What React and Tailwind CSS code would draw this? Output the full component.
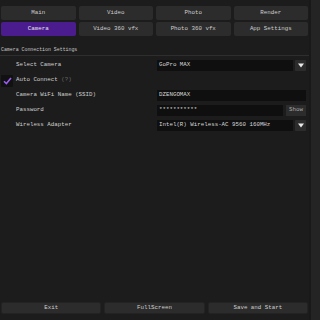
import React from 'react';

const mono = { fontFamily: '"Liberation Mono", "DejaVu Sans Mono", monospace' };

function TabButton({ label, active }) {
  return (
    <div
      className={
        'h-[14px] rounded-[2px] flex items-center justify-center text-[5.8px] ' +
        (active ? 'bg-[#4b1c8e] text-[#e6e6e6]' : 'bg-[#2c2c2c] text-[#cfcfcf]')
      }
    >
      {label}
    </div>
  );
}

function Caret() {
  return (
    <div className="w-[11px] h-[11px] bg-[#2c2c2c] rounded-[1px] flex items-center justify-center">
      <svg width="6" height="5" viewBox="0 0 6 5">
        <path d="M0 0.5h6L3 4.5z" fill="#e8e8e8" />
      </svg>
    </div>
  );
}

function Row({ label, children, check }) {
  return (
    <div className="h-[11px] flex items-center">
      <div className="w-[16px] flex items-center">{check}</div>
      <div className="w-[141px] text-[5.8px] text-[#cfcfcf]">{label}</div>
      <div className="w-[149px] flex items-center gap-[2px] h-full">{children}</div>
    </div>
  );
}

export default function App() {
  const tabs = ['Main', 'Video', 'Photo', 'Render', 'Camera', 'Video 360 vfx', 'Photo 360 vfx', 'App Settings'];
  return (
    <div className="w-[320px] h-[320px] bg-[#1c1c1c] flex overflow-hidden" style={mono}>
      <div className="w-[309px] flex flex-col h-full">
        {/* tabs */}
        <div className="grid grid-cols-4 gap-x-[3px] gap-y-[2px] pt-[6px] pl-[1px] pr-[1px]">
          {tabs.map((t) => (
            <TabButton key={t} label={t} active={t === 'Camera'} />
          ))}
        </div>

        <div className="mt-[10px] pl-[1px] text-[4.9px] text-[#c8c8c8] leading-[7px]">Camera Connection Settings</div>
        <div className="mt-[2px] h-px bg-[#2e2e2e]" />

        <div className="mt-[4px] flex flex-col gap-[4px]">
          <Row label="Select Camera">
            <div className="flex-1 h-full bg-[#0f0f0f] text-[5.8px] text-[#d6d6d6] flex items-center px-[2px]">GoPro MAX</div>
            <Caret />
          </Row>
          <Row
            label={
              <span>
                Auto Connect <span className="text-[#6a6a6a]">(?)</span>
              </span>
            }
            check={
              <div className="w-[12px] h-[12px] bg-[#111111] rounded-[1px] flex items-center justify-center ml-[1px]">
                <svg width="9" height="8" viewBox="0 0 9 8">
                  <path d="M1 4.2L3.4 6.6L8 1" stroke="#9a5cf2" strokeWidth="1.6" fill="none" />
                </svg>
              </div>
            }
          />
          <Row label="Camera WiFi Name (SSID)">
            <div className="flex-1 h-full bg-[#0f0f0f] text-[5.8px] text-[#d6d6d6] flex items-center px-[2px]">DZENGOMAX</div>
          </Row>
          <Row label="Password">
            <div className="flex-1 h-full bg-[#0f0f0f] text-[5.8px] text-[#d6d6d6] flex items-center px-[2px]">***********</div>
            <div className="w-[20px] h-full bg-[#2c2c2c] text-[5.8px] text-[#a8a8a8] flex items-center justify-center ml-[1px]">Show</div>
          </Row>
          <Row label="Wireless Adapter">
            <div className="flex-1 h-full bg-[#0f0f0f] text-[5.8px] text-[#d6d6d6] flex items-center px-[2px] whitespace-nowrap">Intel(R) Wireless-AC 9560 160MHz</div>
            <Caret />
          </Row>
        </div>

        <div className="flex-1" />

        {/* bottom buttons */}
        <div className="grid grid-cols-3 gap-x-[3px] pl-[1px] pr-[1px] pb-[6px]">
          {['Exit', 'FullScreen', 'Save and Start'].map((b) => (
            <div
              key={b}
              className="h-[12px] bg-[#2c2c2c] rounded-[2px] border border-[#232323] flex items-center justify-center text-[5.8px] text-[#cfcfcf]"
            >
              {b}
            </div>
          ))}
        </div>
      </div>
      <div className="flex-1 bg-[#242424] border-l-[2px] border-[#191919]" />
    </div>
  );
}
